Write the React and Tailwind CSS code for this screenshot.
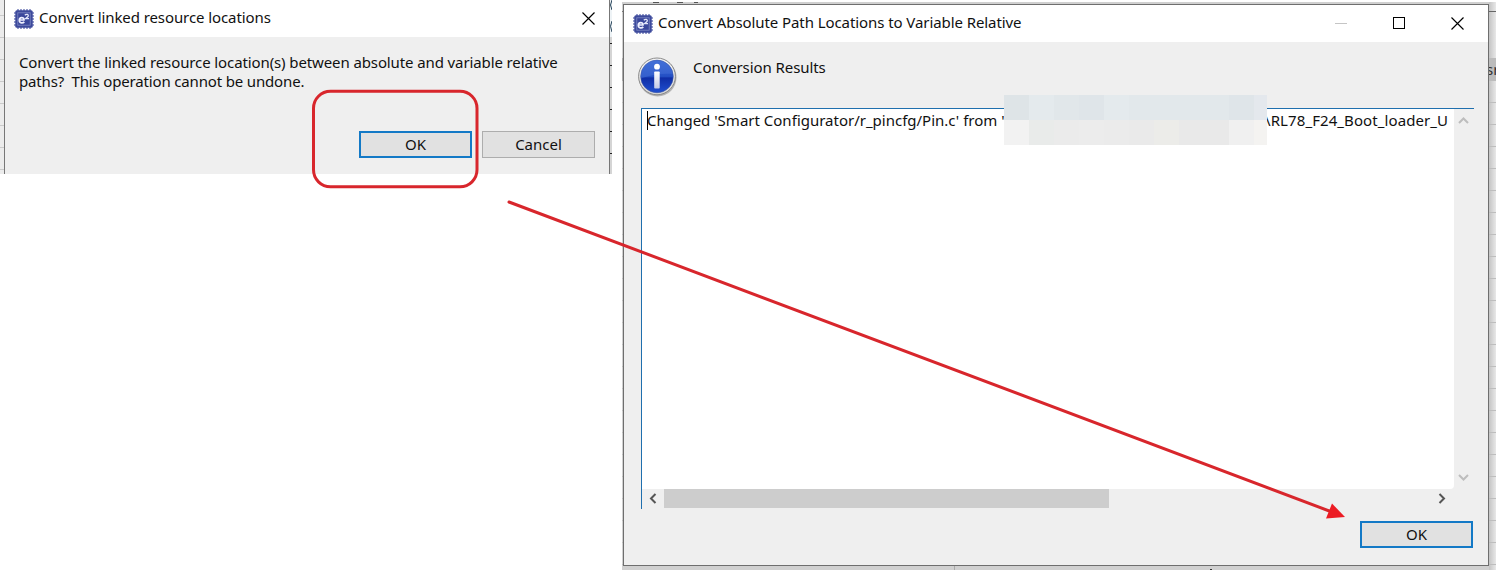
import React from 'react';

const range = (start, end, step) => {
  const out = [];
  for (let v = start; v < end; v += step) out.push(v);
  return out;
};

function ChipIcon() {
  const pins = [3, 6, 9, 12, 15];
  return (
    <svg width="20" height="20" viewBox="0 0 20 20" className="shrink-0">
      {pins.map((p) => (
        <g key={p} fill="#7d86be">
          <rect x={p + 0.2} y="0" width="1.6" height="20" />
          <rect x="0" y={p + 0.2} width="20" height="1.6" />
        </g>
      ))}
      <rect x="1.3" y="1.3" width="17.4" height="17.4" rx="1.5" fill="#3d4a9c" />
      <rect x="3.800" y="3.800" width="12.400" height="12.400" fill="#3a479b" stroke="#7f89c4" strokeWidth="0.8" />
      <path d="M5.300 11H10C10.200 7.700 5.300 7.700 5.300 11.200C5.300 14.500 9 14.300 10.300 12.900" fill="none" stroke="#eef0ff" strokeWidth="1.7" />
      <path d="M10.800 6.200C12.300 4.600 15.200 5.300 14 7.500L11.500 9.700H15" fill="none" stroke="#e3e6fa" strokeWidth="1.3" />
    </svg>
  );
}

function CloseIcon() {
  return (
    <svg width="13" height="13" viewBox="0 0 13 13">
      <path d="M0.5 0.5L12.5 12.5M12.5 0.5L0.5 12.5" stroke="#000" strokeWidth="1.15" />
    </svg>
  );
}

function InfoIcon() {
  return (
    <svg width="40" height="40" viewBox="0 0 40 40" className="shrink-0">
      <defs>
        <linearGradient id="ring" x1="0" y1="0" x2="0" y2="1">
          <stop offset="0" stopColor="#f5f5f5" />
          <stop offset="1" stopColor="#d4d4d4" />
        </linearGradient>
        <linearGradient id="ball" x1="0" y1="0" x2="0" y2="1">
          <stop offset="0" stopColor="#3767d2" />
          <stop offset="0.5" stopColor="#2450c4" />
          <stop offset="0.55" stopColor="#0f2ea6" />
          <stop offset="1" stopColor="#1f4fd0" />
        </linearGradient>
        <linearGradient id="stem" x1="0" y1="0" x2="0" y2="1">
          <stop offset="0" stopColor="#ffffff" />
          <stop offset="1" stopColor="#c3cbe6" />
        </linearGradient>
      </defs>
      <circle cx="19.600" cy="20.6" r="18.900" fill="#b5b5b5" />
      <circle cx="19" cy="19.4" r="18.4" fill="url(#ring)" stroke="#808080" strokeWidth="0.9" />
      <circle cx="19" cy="19.4" r="16.3" fill="url(#ball)" stroke="#3a56a4" strokeWidth="0.6" />
      <path d="M3 21.5A16 16 0 0 1 34.800 17C25 16 13 17.500 3 21.500Z" fill="#5d86e3" opacity="0.3" />
      <circle cx="19" cy="9.700" r="2.900" fill="#fff" />
      <rect x="16.200" y="14.500" width="5.500" height="17" rx="0.800" fill="url(#stem)" />
    </svg>
  );
}

function Chevron({ d, color, w, h }) {
  return (
    <svg width={w} height={h} viewBox={`0 0 ${w} ${h}`}>
      <path d={d} fill="none" stroke={color} strokeWidth="2" />
    </svg>
  );
}

function Button({ children, primary }) {
  return (
    <button
      className={
        primary
          ? 'flex h-[27px] w-[113px] items-center justify-center border-2 border-[#1379c6] bg-[#e1e1e1] pb-[2px] text-[15px] leading-5'
          : 'flex h-[27px] w-[113px] items-center justify-center border border-[#adadad] bg-[#e1e1e1] pb-[2px] text-[15px] leading-5'
      }
    >
      {children}
    </button>
  );
}

function ConfirmDialog() {
  return (
    <section className="relative flex h-[174px] w-[612px] shrink-0 overflow-hidden bg-[#ececec] bg-[repeating-linear-gradient(to_bottom,transparent_0px,transparent_15px,#cbcbcb_15px,#cbcbcb_16px,transparent_16px,transparent_22px)] pl-1">
      <div className="flex w-[606px] shrink-0 flex-col border-x border-[#777777] bg-[#efefef]">
        <header className="flex h-[37px] items-center bg-white pl-[9px] pr-[14px]">
          <ChipIcon />
          <h1 className="mb-[3px] ml-[5px] grow whitespace-nowrap text-[15px] tracking-[-0.09px]">Convert linked resource locations</h1>
          <CloseIcon />
        </header>
        <p className="mt-[16px] whitespace-pre pl-[14px] text-[15px] leading-[19px] tracking-[-0.11px]">
          {'Convert the linked resource location(s) between absolute and variable relative\n'}
          <span className="tracking-[-0.16px]">{'paths?  This operation cannot be undone.'}</span>
        </p>
        <div className="mt-[40px] flex justify-end gap-[10px] pr-[14px]">
          <Button primary>OK</Button>
          <Button>Cancel</Button>
        </div>
      </div>
      <svg width="2" height="174" viewBox="0 0 2 174" className="shrink-0">
        <rect width="2" height="37" fill="#eef3f6" />
        <rect y="37" width="2" height="137" fill="#d5d5d5" />
        <path d="M2 0Q-1 5 2 10M2 21Q-1 26 2 32" stroke="#26435a" fill="none" />
        {range(43, 174, 22).map((y) => (
          <rect key={y} y={y} width="2" height="1" fill="#222" />
        ))}
      </svg>
    </section>
  );
}

function Redaction() {
  return (
    <div className="absolute left-[380px] top-[90px] grid h-[50px] w-[263px] grid-cols-[repeat(10,25px)_13px] grid-rows-2">
      <i className="bg-[#dee4e7]" /><i className="bg-[#e4eaed]" /><i className="bg-[#e1e7ea]" /><i className="bg-[#dfe5e9]" />
      <i className="bg-[#e4eaed]" /><i className="bg-[#e2e8eb]" /><i className="bg-[#e2e8eb]" /><i className="bg-[#e2e8eb]" />
      <i className="bg-[#e2e8eb]" /><i className="bg-[#dfe5e9]" /><i className="bg-[#e4e8ed]" />
      <i className="bg-[#f2f2f2]" /><i className="bg-[#e9ebea]" /><i className="bg-[#ebebeb]" /><i className="bg-[#ececec]" />
      <i className="bg-[#ebebeb]" /><i className="bg-[#eaeaea]" /><i className="bg-[#ecece9]" /><i className="bg-[#e9e9e9]" />
      <i className="bg-[#e9e9e9]" /><i className="bg-[#f0f0f0]" /><i className="bg-[#f4f3f1]" />
    </div>
  );
}

function Backdrop() {
  return (
    <svg width="874" height="568" viewBox="0 0 874 568" className="absolute inset-0">
      <defs>
        <linearGradient id="sideShade">
          <stop offset="0" stopColor="#c4c4c4" />
          <stop offset="1" stopColor="#e8e8e8" />
        </linearGradient>
      </defs>
      <rect width="874" height="568" fill="#d0d0d0" />
      <rect x="867" y="0" width="7" height="568" fill="url(#sideShade)" />
      <rect x="867" y="9" width="7" height="1" fill="#666" />
      <rect x="867" y="56" width="7" height="23" fill="#bcbcbc" />
      <rect x="0" y="9" width="2" height="1" fill="#777" />
      <rect x="0" y="56" width="1" height="23" fill="#aaa" />
      {range(100, 568, 22).map((y) => (
        <g key={y} fill="#bdbdbd">
          <rect x="867" y={y} width="7" height="1" />
          <rect x="0" y={y} width="1" height="1" />
        </g>
      ))}
      <path d="M31 .5H37M55 .5H61M72 .5H76" stroke="#555" />
      <path d="M332.500 564V568" stroke="#aaa" />
      <path d="M588 567.500H590" stroke="#333" />
    </svg>
  );
}

function ResultWindow() {
  return (
    <section className="relative mt-[2px] h-[568px] w-[874px] shrink-0 overflow-hidden">
      <Backdrop />
      <div className="absolute left-[864px] top-[58px] w-[10px] overflow-hidden whitespace-nowrap text-[15px] leading-[18px] text-[#333]">sr</div>
      <div className="relative ml-[1px] mt-[2px] flex h-[562px] w-[866px] flex-col border border-[#6e6e6e] bg-[#efefef]">
        <header className="flex h-[37px] shrink-0 items-center bg-white pl-[9px] pr-[24px]">
          <ChipIcon />
          <h1 className="mb-[3px] ml-[5px] grow whitespace-nowrap text-[15px] tracking-[-0.08px]">Convert Absolute Path Locations to Variable Relative</h1>
          <div className="mb-px flex items-center gap-[46px]">
            <span className="h-px w-3 bg-[#c5c5c5]" />
            <span className="h-3 w-3 border border-black" />
            <CloseIcon />
          </div>
        </header>
        <div className="flex h-[66px] shrink-0 pl-[14px] pt-[15px]">
          <InfoIcon />
          <h2 className="ml-[15px] text-[15px] leading-5 tracking-[-0.08px]">Conversion Results</h2>
        </div>
        <div className="ml-[17px] flex h-[401px] w-[833px] shrink-0 flex-col border-l border-t border-[#1f6fae]">
          <div className="flex h-[380px]">
            <div className="flex w-[812px] whitespace-nowrap rounded-br-sm bg-white pl-[5px] pt-[1px] text-[15px] leading-5">
              <span className="mt-px h-[19px] w-px shrink-0 bg-black" />
              <span className="-ml-px w-[357px] shrink-0">Changed 'Smart Configurator/r_pincfg/Pin.c' from '</span>
              <span className="ml-[261px] tracking-[0.09px]">\RL78_F24_Boot_loader_U</span>
            </div>
            <div className="flex w-[18px] flex-col items-center justify-between pb-[7px] pt-[7px]">
              <Chevron w={11} h={9} d="M1 7L5.500 2.500L10 7" color="#bdbdbd" />
              <Chevron w={11} h={9} d="M1 2L5.500 6.500L10 2" color="#bdbdbd" />
            </div>
          </div>
          <div className="flex h-[19px] w-[812px] items-center">
            <span className="flex w-[22px] justify-center pr-px"><Chevron w={8} h={11} d="M6.500 1L2 5.500L6.500 10" color="#555" /></span>
            <span className="h-[19px] w-[445px] bg-[#cdcdcd]" />
            <span className="grow" />
            <span className="flex w-[24px] justify-center"><Chevron w={8} h={11} d="M1.500 1L6 5.500L1.500 10" color="#555" /></span>
          </div>
        </div>
        <div className="mt-[12px] flex justify-end pr-[15px]">
          <Button primary>OK</Button>
        </div>
        <Redaction />
      </div>
    </section>
  );
}

export default function App() {
  return (
    <main className="relative flex h-[570px] w-[1500px] gap-[10px] overflow-hidden bg-white font-['Noto_Sans','Open_Sans',sans-serif] text-[#111]">
      <ConfirmDialog />
      <ResultWindow />
      <svg width="1500" height="570" viewBox="0 0 1500 570" className="pointer-events-none absolute inset-0">
        <rect x="313.500" y="91.300" width="163.500" height="95.500" rx="17" fill="none" stroke="#d8262c" strokeWidth="3" />
        <path d="M509 202L1332 512" stroke="#d8262c" strokeWidth="3" strokeLinecap="round" />
        <path d="M1345 517L1332 503.500L1326 518.500Z" fill="#ec1c24" />
      </svg>
    </main>
  );
}
